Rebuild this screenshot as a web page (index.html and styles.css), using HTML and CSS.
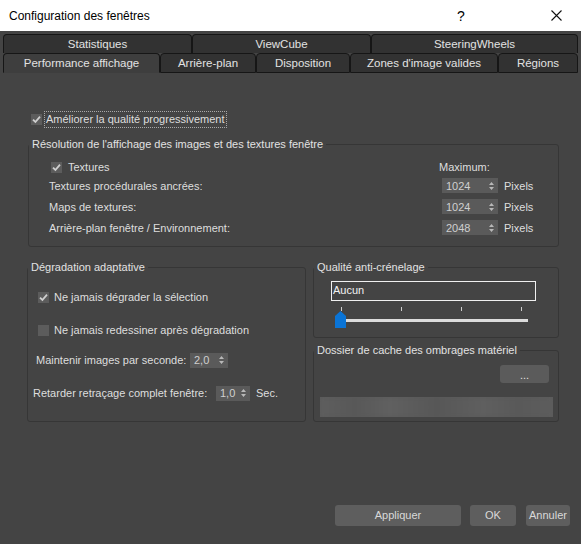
FILE: index.html
```html
<!DOCTYPE html>
<html lang="fr">
<head>
<meta charset="utf-8">
<title>Configuration des fenêtres</title>
<link rel="stylesheet" href="styles.css">
</head>
<body>
<div class="window">
  <div class="titlebar">
    <span class="title">Configuration des fenêtres</span>
    <span class="help">?</span>
    <span class="close"><svg width="11" height="11" viewBox="0 0 11 11"><path d="M0.5 0.5 L10.5 10.5 M10.5 0.5 L0.5 10.5" stroke="#111" stroke-width="1.1" fill="none"/></svg></span>
  </div>
  <div class="tabs">
    <div class="tabrow back">
      <div class="tab w-stat">Statistiques</div>
      <div class="tab w-cube">ViewCube</div>
      <div class="tab w-steer">SteeringWheels</div>
    </div>
    <div class="tabrow front">
      <div class="tab sel w-perf">Performance affichage</div>
      <div class="tab w-bg">Arrière-plan</div>
      <div class="tab w-disp">Disposition</div>
      <div class="tab w-zones">Zones d'image valides</div>
      <div class="tab w-reg">Régions</div>
    </div>
  </div>
  <div class="panel">
    <div class="main-check">
      <span class="cb checked"><svg width="11" height="11" viewBox="0 0 11 11"><path d="M2 5.6 L4.4 8 L9 2.6" stroke="#cfcfcf" stroke-width="1.8" fill="none"/></svg></span>
      <span class="focus">Améliorer la qualité progressivement</span>
    </div>

    <fieldset class="group g-res">
      <legend>Résolution de l'affichage des images et des textures fenêtre</legend>
      <div class="res-body">
        <div class="res-head">
          <span class="chk"><span class="cb checked"><svg width="11" height="11" viewBox="0 0 11 11"><path d="M2 5.6 L4.4 8 L9 2.6" stroke="#cfcfcf" stroke-width="1.8" fill="none"/></svg></span><span>Textures</span></span>
          <span class="maxlbl">Maximum:</span>
        </div>
        <div class="res-row">
          <span class="lbl">Textures procédurales ancrées:</span>
          <span class="spin"><span class="val">1024</span><span class="arr"><svg width="5" height="8" viewBox="0 0 5 8"><path d="M2.5 0 L5 3 L0 3 Z M0 5 L5 5 L2.5 8 Z" fill="#b8b8b8"/></svg></span></span>
          <span class="unit">Pixels</span>
        </div>
        <div class="res-row">
          <span class="lbl">Maps de textures:</span>
          <span class="spin"><span class="val">1024</span><span class="arr"><svg width="5" height="8" viewBox="0 0 5 8"><path d="M2.5 0 L5 3 L0 3 Z M0 5 L5 5 L2.5 8 Z" fill="#b8b8b8"/></svg></span></span>
          <span class="unit">Pixels</span>
        </div>
        <div class="res-row">
          <span class="lbl">Arrière-plan fenêtre / Environnement:</span>
          <span class="spin"><span class="val">2048</span><span class="arr"><svg width="5" height="8" viewBox="0 0 5 8"><path d="M2.5 0 L5 3 L0 3 Z M0 5 L5 5 L2.5 8 Z" fill="#b8b8b8"/></svg></span></span>
          <span class="unit">Pixels</span>
        </div>
      </div>
    </fieldset>

    <div class="cols">
      <fieldset class="group g-deg">
        <legend>Dégradation adaptative</legend>
        <div class="deg-body">
          <div class="chk row-a"><span class="cb checked"><svg width="11" height="11" viewBox="0 0 11 11"><path d="M2 5.6 L4.4 8 L9 2.6" stroke="#cfcfcf" stroke-width="1.8" fill="none"/></svg></span><span>Ne jamais dégrader la sélection</span></div>
          <div class="chk row-b"><span class="cb"></span><span>Ne jamais redessiner après dégradation</span></div>
          <div class="spinrow row-c">
            <span class="lbl-c">Maintenir images par seconde:</span>
            <span class="spin s-c"><span class="val">2,0</span><span class="arr"><svg width="5" height="8" viewBox="0 0 5 8"><path d="M2.5 0 L5 3 L0 3 Z M0 5 L5 5 L2.5 8 Z" fill="#b8b8b8"/></svg></span></span>
          </div>
          <div class="spinrow row-d">
            <span class="lbl-d">Retarder retraçage complet fenêtre:</span>
            <span class="spin s-d"><span class="val">1,0</span><span class="arr"><svg width="5" height="8" viewBox="0 0 5 8"><path d="M2.5 0 L5 3 L0 3 Z M0 5 L5 5 L2.5 8 Z" fill="#b8b8b8"/></svg></span></span>
            <span class="unit">Sec.</span>
          </div>
        </div>
      </fieldset>

      <div class="rightcol">
        <fieldset class="group g-aa">
          <legend>Qualité anti-crénelage</legend>
          <div class="aa-body">
            <div class="field">Aucun</div>
            <div class="slider">
              <span class="tick t1"></span>
              <span class="tick t2"></span>
              <span class="tick t3"></span>
              <span class="tick t4"></span>
              <span class="track"></span>
              <svg class="thumb" width="11" height="17" viewBox="0 0 11 17"><path d="M0 5 L5.5 0 L11 5 L11 17 L0 17 Z" fill="#0a74d6"/></svg>
            </div>
          </div>
        </fieldset>
        <fieldset class="group g-cache">
          <legend>Dossier de cache des ombrages matériel</legend>
          <div class="cache-body">
            <div class="browse-wrap"><span class="browse">...</span></div>
            <div class="blurbar"><div class="blurinner"></div></div>
          </div>
        </fieldset>
      </div>
    </div>

    <div class="buttons">
      <span class="btn b-apply">Appliquer</span>
      <span class="btn b-ok">OK</span>
      <span class="btn b-cancel">Annuler</span>
    </div>
  </div>
</div>
</body>
</html>
```
FILE: styles.css
```css
html, body {
  margin: 0;
  padding: 0;
  background: #444444;
}
body {
  font-family: "Liberation Sans", Arial, sans-serif;
  font-size: 11px;
  color: #dedede;
}
.window {
  width: 581px;
  height: 544px;
  background: #444444;
  overflow: hidden;
  position: relative;
}
.titlebar {
  height: 31px;
  background: #ffffff;
  display: flex;
  align-items: center;
  color: #000;
}
.title {
  font-size: 12px;
  margin-left: 9px;
  flex: 1;
}
.help {
  font-size: 14px;
  width: 12px;
  margin-right: 84px;
  text-align: center;
}
.close {
  width: 11px;
  height: 11px;
  display: flex;
  margin-right: 19px;
}
.tabs {
  padding-top: 3px;
  padding-left: 3px;
}
.tabrow {
  display: flex;
}
.tab {
  box-sizing: border-box;
  border: 1px solid #161616;
  border-bottom: none;
  border-radius: 4px 4px 0 0;
  background: #323232;
  color: #e2e2e2;
  text-align: center;
  font-size: 11.5px;
}
.back .tab {
  height: 19px;
  line-height: 18px;
}
.front .tab {
  height: 20px;
  line-height: 18px;
  border-bottom: 1px solid #161616;
}
.front .tab.sel {
  background: #3e3e3e;
  border-bottom: 1px solid #3e3e3e;
}
.w-stat { width: 189px; }
.w-cube { width: 179px; }
.w-steer { width: 207px; }
.w-perf { width: 157px; }
.w-bg { width: 96px; }
.w-disp { width: 94px; }
.w-zones { width: 148px; }
.w-reg { width: 80px; }

.panel {
  display: flex;
  flex-direction: column;
}
.cb {
  display: inline-flex;
  box-sizing: border-box;
  width: 11px;
  height: 11px;
  background: #5c5c5c;
  flex: none;
}
.main-check {
  display: flex;
  align-items: center;
  margin-top: 38px;
  margin-left: 31px;
  height: 17px;
}
.focus {
  margin-left: 2px;
  border: 1px dotted #a8a8a8;
  padding: 0 1px;
  line-height: 15px;
}
.group {
  margin: 0;
  padding: 0;
  border: 1px solid #363636;
  border-radius: 3px;
  min-width: 0;
}
.group legend {
  padding: 0 3px;
  margin-left: 0;
  line-height: 16px;
  color: #e2e2e2;
}
.g-res {
  margin-top: 8px;
  margin-left: 28px;
  width: 531px;
  box-sizing: border-box;
}
.res-body {
  padding: 7px 0 8px 20px;
}
.res-head, .res-row {
  display: grid;
  grid-template-columns: 387px 56px auto;
  column-gap: 6px;
  align-items: center;
}
.res-head {
  height: 16px;
}
.res-row {
  height: 21px;
}
.chk {
  display: flex;
  align-items: center;
  gap: 6px;
}
.res-head .chk {
  margin-left: 2px;
}
.maxlbl {
  margin-left: -3px;
  white-space: nowrap;
}
.spin {
  display: flex;
  align-items: center;
  height: 15px;
  background: #5a5a5a;
  color: #cfcfcf;
  box-sizing: border-box;
}
.spin .val {
  flex: 1;
  padding-left: 4px;
}
.spin .arr {
  display: flex;
  width: 5px;
  margin-right: 4px;
}
.res-row .spin {
  width: 56px;
}
.cols {
  display: flex;
  gap: 7px;
  margin-top: 12px;
  margin-left: 27px;
}
.g-deg {
  width: 279px;
  box-sizing: border-box;
}
.deg-body {
  padding: 14px 0 20px 0;
}
.deg-body > div {
  height: 16px;
  display: flex;
  align-items: center;
}
.row-a { margin-left: 10px; }
.row-a, .row-b { gap: 5px; }
.row-b { margin-left: 10px; margin-top: 17px; }
.row-c { margin-left: 8px; margin-top: 14px; }
.row-d { margin-left: 5px; margin-top: 17px; }
.lbl-c { width: 154px; }
.lbl-d { width: 183px; }
.s-c { width: 38px; }
.s-d { width: 34px; }
.row-d .unit { margin-left: 6px; }

.rightcol {
  width: 246px;
  display: flex;
  flex-direction: column;
}
.g-aa, .g-cache {
  box-sizing: border-box;
  width: 246px;
}
.aa-body {
  padding: 6px 0 8px 17px;
}
.field {
  width: 205px;
  height: 20px;
  box-sizing: border-box;
  border: 1px solid #f0f0f0;
  line-height: 17px;
  padding-left: 1px;
  color: #f2f2f2;
}
.slider {
  position: relative;
  margin-top: 6px;
  height: 22px;
  width: 205px;
}
.tick {
  position: absolute;
  top: 0;
  width: 1px;
  height: 4px;
  background: #cfcfcf;
}
.t1 { left: 10px; }
.t2 { left: 70px; }
.t3 { left: 130px; }
.t4 { left: 190px; }
.track {
  position: absolute;
  left: 14px;
  top: 12px;
  width: 183px;
  height: 3px;
  background: #dcdcdc;
}
.thumb {
  position: absolute;
  left: 4px;
  top: 4px;
}
.g-cache {
  margin-top: 4px;
}
.cache-body {
  padding: 7px 0 4px 6px;
}
.browse-wrap {
  display: flex;
  justify-content: flex-end;
  padding-right: 9px;
}
.browse {
  width: 49px;
  height: 18px;
  border-radius: 3px;
  background: #5b5b5b;
  color: #e0e0e0;
  text-align: center;
  line-height: 20px;
  font-size: 11px;
}
.blurbar {
  margin-top: 14px;
  width: 233px;
  height: 20px;
  overflow: hidden;
  background: #5a5a5a;
}
.blurinner {
  width: 100%;
  height: 100%;
  background: linear-gradient(90deg, #5e5e5e 0%, #585858 15%, #606060 30%, #575757 50%, #5f5f5f 70%, #595959 85%, #5d5d5d 100%);
  filter: blur(2px);
}
.buttons {
  display: flex;
  justify-content: flex-end;
  margin-top: 83px;
  padding-right: 11px;
}
.btn {
  height: 21px;
  line-height: 21px;
  border-radius: 3px;
  background: #5e5e5e;
  color: #d9d9d9;
  text-align: center;
  font-size: 11px;
}
.b-apply { width: 126px; }
.b-ok { width: 46px; margin-left: 9px; }
.b-cancel { width: 44px; margin-left: 10px; }
```
